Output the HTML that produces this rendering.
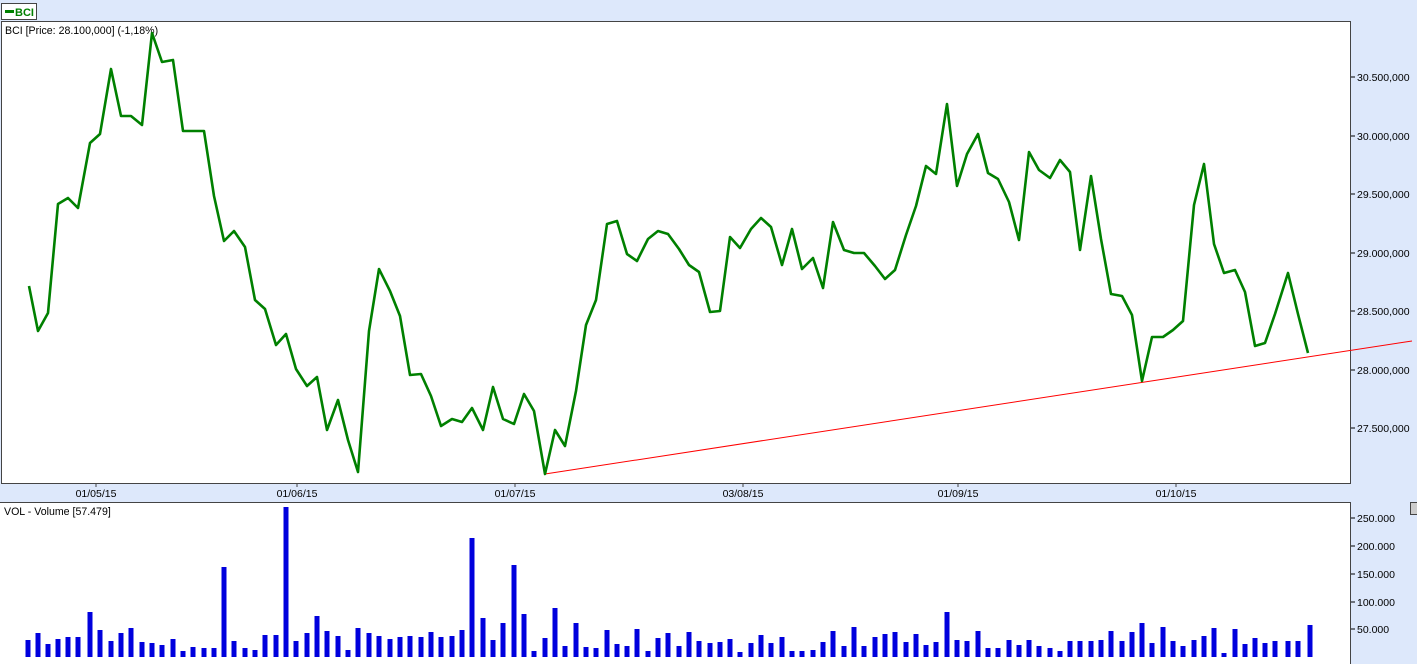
<!DOCTYPE html>
<html><head><style>
html,body{margin:0;padding:0;background:#dde8fb;}
svg{display:block;font-family:"Liberation Sans",sans-serif;}
</style></head><body>
<svg width="1417" height="664" xmlns="http://www.w3.org/2000/svg">
<rect width="1417" height="664" fill="#dde8fb"/>
<rect x="1.5" y="3.5" width="35" height="16" fill="#fff" stroke="#444"/>
<rect x="5" y="10" width="9" height="3" fill="#008000"/>
<text x="15" y="16" font-size="11" font-weight="bold" fill="#008000">BCI</text>
<rect x="1.5" y="21.5" width="1349" height="462" fill="#fff" stroke="#444"/>
<rect x="-1" y="502.5" width="1351.5" height="170" fill="#fff" stroke="#444"/>
<text x="5" y="34" font-size="10.6">BCI [Price: 28.100,000] (-1,18%)</text>
<text x="4" y="515" font-size="10.6">VOL - Volume [57.479]</text>
<g font-size="10.5" fill="#000">
<text x="1357" y="81">30.500,000</text><path d="M1351 77h4" stroke="#000"/>
<text x="1357" y="140">30.000,000</text><path d="M1351 136h4" stroke="#000"/>
<text x="1357" y="198">29.500,000</text><path d="M1351 194h4" stroke="#000"/>
<text x="1357" y="257">29.000,000</text><path d="M1351 253h4" stroke="#000"/>
<text x="1357" y="315">28.500,000</text><path d="M1351 311h4" stroke="#000"/>
<text x="1357" y="374">28.000,000</text><path d="M1351 370h4" stroke="#000"/>
<text x="1357" y="432">27.500,000</text><path d="M1351 428h4" stroke="#000"/>
<text x="1357" y="522">250.000</text><path d="M1351 518h4" stroke="#000"/>
<text x="1357" y="550">200.000</text><path d="M1351 546h4" stroke="#000"/>
<text x="1357" y="578">150.000</text><path d="M1351 574h4" stroke="#000"/>
<text x="1357" y="606">100.000</text><path d="M1351 602h4" stroke="#000"/>
<text x="1357" y="633">50.000</text><path d="M1351 629h4" stroke="#000"/>
</g>
<g font-size="10.5" text-anchor="middle">
<text x="96" y="497">01/05/15</text>
<text x="297" y="497">01/06/15</text>
<text x="515" y="497">01/07/15</text>
<text x="743" y="497">03/08/15</text>
<text x="958" y="497">01/09/15</text>
<text x="1176" y="497">01/10/15</text>
</g>
<path d="M96 483v4M297 483v4M515 483v4M743 483v4M958 483v4M1176 483v4" stroke="#444"/>
<rect x="1410.5" y="502.5" width="8" height="12" fill="#ccc" stroke="#444"/>
<line x1="545" y1="474" x2="1412" y2="341" stroke="#ff0000" stroke-width="1"/>
<polyline fill="none" stroke="#008000" stroke-width="2.6" stroke-linejoin="round" points="29,286 38,331 48,313 58,204 68,198 78,208 90,143 100,134 111,69 121,116 131,116 142,125 152,33 162,62 173,60 183,131 193,131 204,131 214,196 224,241 234,231 245,247 255,300 265,309 276,345 286,334 296,369 307,386 317,377 327,430 338,400 348,440 358,472 369,331 379,269 390,291 400,316 410,375 421,374 431,396 441,426 452,419 462,422 472,408 483,430 493,387 503,419 514,424 524,394 534,411 545,474 555,430 565,446 576,391 586,325 596,300 607,224 617,221 627,254 637,261 648,239 658,231 668,234 679,249 689,265 699,272 710,312 720,311 730,237 740,248 751,229 761,218 771,227 782,265 792,229 802,269 813,258 823,288 833,222 844,250 854,253 864,253 875,266 885,279 895,270 906,235 916,206 926,166 936,174 947,104 957,186 967,154 978,134 988,173 998,179 1009,202 1019,240 1029,152 1039,170 1050,178 1060,160 1070,172 1080,250 1091,176 1101,239 1111,294 1122,296 1132,315 1142,381 1152,337 1163,337 1173,330 1183,321 1194,205 1204,164 1214,244 1224,273 1235,270 1245,292 1255,346 1265,343 1275,314 1288,273 1298,314 1308,353"/>
<path stroke="#0000dd" stroke-width="5" fill="none" d="M28 657V640M38 657V633M48 657V644M58 657V639M68 657V637M78 657V637M90 657V612M100 657V630M111 657V641M121 657V633M131 657V628M142 657V642M152 657V643M162 657V645M173 657V639M183 657V651M193 657V647M204 657V648M214 657V648M224 657V567M234 657V641M245 657V648M255 657V650M265 657V635M276 657V635M286 657V507M296 657V641M307 657V633M317 657V616M327 657V631M338 657V636M348 657V650M358 657V628M369 657V633M379 657V636M390 657V639M400 657V637M410 657V636M421 657V637M431 657V632M441 657V637M452 657V636M462 657V630M472 657V538M483 657V618M493 657V640M503 657V623M514 657V565M524 657V614M534 657V651M545 657V638M555 657V608M565 657V646M576 657V623M586 657V647M596 657V648M607 657V630M617 657V644M627 657V646M637 657V629M648 657V651M658 657V638M668 657V633M679 657V646M689 657V632M699 657V641M710 657V643M720 657V642M730 657V639M740 657V652M751 657V643M761 657V635M771 657V643M782 657V637M792 657V651M802 657V651M813 657V650M823 657V642M833 657V631M844 657V646M854 657V627M864 657V646M875 657V637M885 657V634M895 657V632M906 657V642M916 657V634M926 657V645M936 657V642M947 657V612M957 657V640M967 657V641M978 657V631M988 657V648M998 657V648M1009 657V640M1019 657V645M1029 657V640M1039 657V646M1050 657V648M1060 657V651M1070 657V641M1080 657V641M1091 657V641M1101 657V640M1111 657V631M1122 657V641M1132 657V632M1142 657V623M1152 657V643M1163 657V627M1173 657V641M1183 657V646M1194 657V640M1204 657V636M1214 657V628M1224 657V653M1235 657V629M1245 657V644M1255 657V638M1265 657V643M1275 657V641M1288 657V641M1298 657V641M1310 657V625"/>
</svg>
</body></html>
